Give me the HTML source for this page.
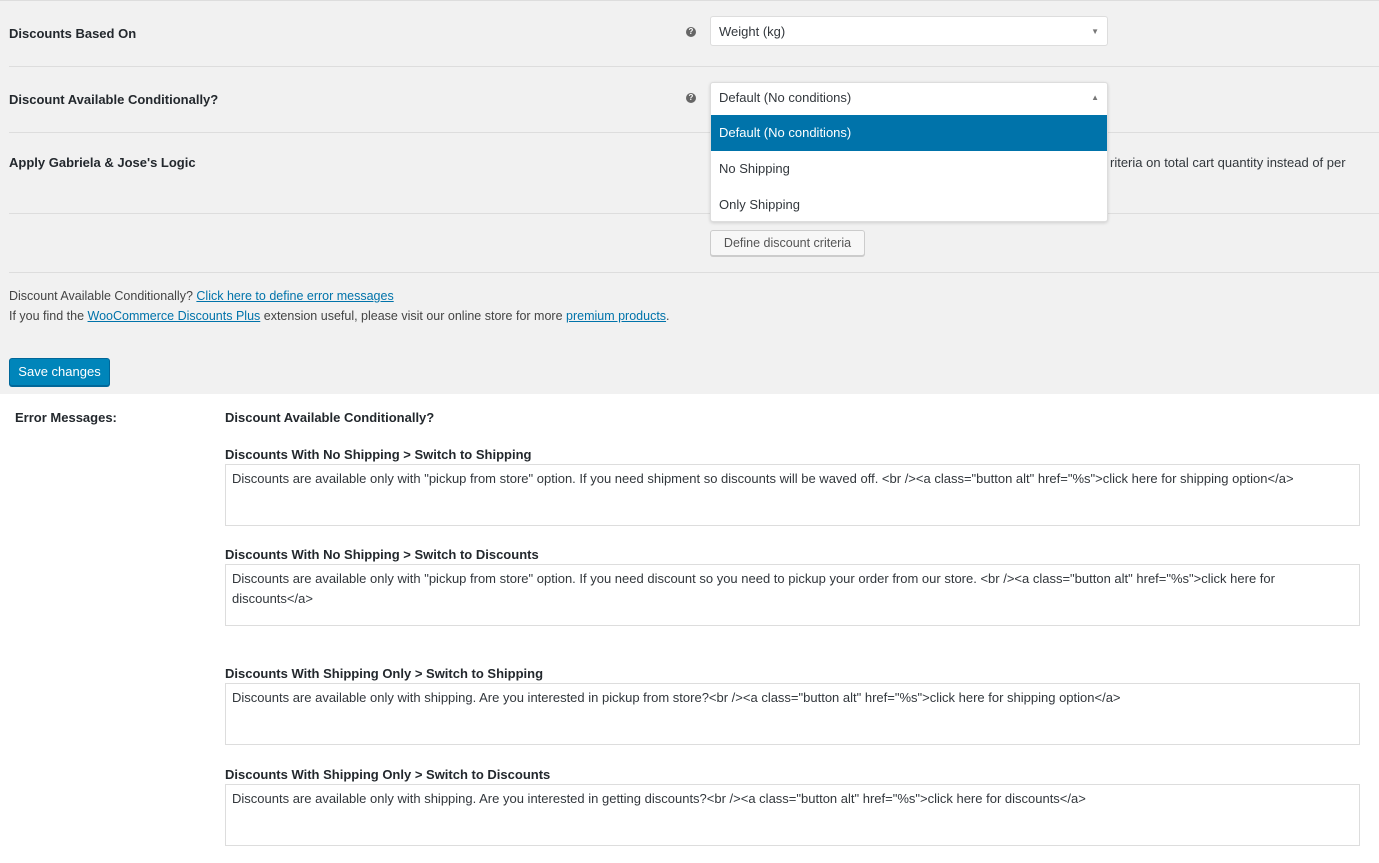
<!DOCTYPE html>
<html><head><style>
body{margin:0;width:1379px;height:863px;overflow:hidden;font-family:"Liberation Sans",sans-serif;font-size:13px;color:#23282d;background:#fff;position:relative}
.gray{position:absolute;left:0;top:0;width:1379px;height:394px;background:#f1f1f1}
.a{position:absolute;white-space:nowrap}
.hr{position:absolute;left:9px;right:0;height:1px;background:#ddd}
.lbl{font-weight:bold;font-size:13px;color:#23282d}
.q{position:absolute;width:10px;height:10px;border-radius:50%;background:#666;color:#fff;font-size:8px;font-weight:bold;text-align:center;line-height:10px}
.sel{position:absolute;left:710px;width:398px;height:30px;background:#fff;border:1px solid #ddd;border-radius:3px;box-sizing:border-box;padding-left:8px;line-height:30px;font-size:13px;color:#32373c}
a{color:#0073aa;text-decoration:underline}
.ta{position:absolute;left:225px;width:1135px;height:62px;border:1px solid #ddd;box-sizing:border-box;padding:4px 6px;line-height:20px;color:#32373c;white-space:normal}
.tl{position:absolute;left:225px;font-weight:bold;color:#23282d}
</style></head><body>
<div class="gray"></div>
<div class="hr" style="top:0;left:0"></div>
<div class="hr" style="top:66px"></div>
<div class="hr" style="top:132px"></div>
<div class="hr" style="top:213px"></div>
<div class="hr" style="top:272px"></div>
<div class="a lbl" style="left:9px;top:26px">Discounts Based On</div>
<div class="a lbl" style="left:9px;top:92px">Discount Available Conditionally?</div>
<div class="a lbl" style="left:9px;top:155px">Apply Gabriela &amp; Jose's Logic</div>
<div class="q" style="left:686px;top:27px">?</div>
<div class="q" style="left:686px;top:93px">?</div>
<div class="sel" style="top:16px">Weight (kg)<span style="position:absolute;right:8px;top:0;font-size:8px;color:#777">▼</span></div>
<div class="a" style="left:1110px;top:155px;color:#32373c">riteria on total cart quantity instead of per</div>
<div class="sel" style="top:82px;height:140px;border-radius:3px;box-shadow:0 1px 3px rgba(0,0,0,.15)">
 <div style="height:31px">Default (No conditions)<span style="position:absolute;right:8px;top:0;font-size:8px;color:#777">▲</span></div>
 <div style="position:absolute;left:0;right:0;top:32px;height:36px;background:#0073aa;color:#fff;padding-left:8px;line-height:36px">Default (No conditions)</div>
 <div style="position:absolute;left:8px;top:68px;line-height:36px">No Shipping</div>
 <div style="position:absolute;left:8px;top:104px;line-height:36px">Only Shipping</div>
</div>
<div class="a" style="left:710px;top:230px;height:26px;width:155px;box-sizing:border-box;border:1px solid #ccc;border-radius:3px;background:#f7f7f7;box-shadow:0 1px 0 #ccc;line-height:24px;text-align:center;font-size:12.5px;color:#555">Define discount criteria</div>
<div class="a" style="left:9px;top:289px;font-size:12.5px;color:#444">Discount Available Conditionally? <a>Click here to define error messages</a></div>
<div class="a" style="left:9px;top:309px;font-size:12.5px;color:#444">If you find the <a>WooCommerce Discounts Plus</a> extension useful, please visit our online store for more <a>premium products</a>.</div>
<div class="a" style="left:9px;top:358px;width:101px;height:28px;background:#0085ba;border:1px solid #006799;border-radius:3px;box-sizing:border-box;color:#fff;line-height:26px;text-align:center;font-size:13px;box-shadow:0 1px 0 #006799">Save changes</div>
<div class="a lbl" style="left:15px;top:410px">Error Messages:</div>
<div class="a lbl" style="left:225px;top:410px">Discount Available Conditionally?</div>
<div class="tl a" style="top:447px">Discounts With No Shipping &gt; Switch to Shipping</div>
<div class="ta" style="top:464px">Discounts are available only with "pickup from store" option. If you need shipment so discounts will be waved off. &lt;br /&gt;&lt;a class="button alt" href="%s"&gt;click here for shipping option&lt;/a&gt;</div>
<div class="tl a" style="top:547px">Discounts With No Shipping &gt; Switch to Discounts</div>
<div class="ta" style="top:564px">Discounts are available only with "pickup from store" option. If you need discount so you need to pickup your order from our store. &lt;br /&gt;&lt;a class="button alt" href="%s"&gt;click here for discounts&lt;/a&gt;</div>
<div class="tl a" style="top:666px">Discounts With Shipping Only &gt; Switch to Shipping</div>
<div class="ta" style="top:683px">Discounts are available only with shipping. Are you interested in pickup from store?&lt;br /&gt;&lt;a class="button alt" href="%s"&gt;click here for shipping option&lt;/a&gt;</div>
<div class="tl a" style="top:767px">Discounts With Shipping Only &gt; Switch to Discounts</div>
<div class="ta" style="top:784px">Discounts are available only with shipping. Are you interested in getting discounts?&lt;br /&gt;&lt;a class="button alt" href="%s"&gt;click here for discounts&lt;/a&gt;</div>
</body></html>
